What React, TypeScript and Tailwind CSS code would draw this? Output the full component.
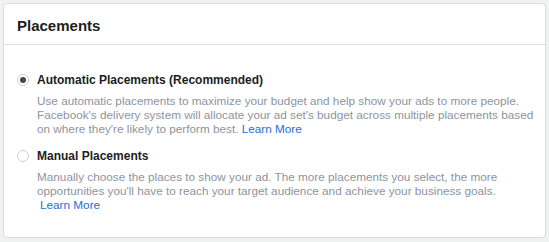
import React from "react";

function Radio({ checked }: { checked?: boolean }) {
  return (
    <span className="mt-[1px] flex h-[12px] w-[12px] shrink-0 items-center justify-center rounded-full border border-[#ccd0d5] bg-white">
      {checked && <span className="h-[6px] w-[6px] rounded-full bg-[#444950]" />}
    </span>
  );
}

export default function App() {
  return (
    <div className="h-[242px] w-[549px] bg-[#f0f2f1] p-[3px]" style={{ fontFamily: '"Liberation Sans", Arial, sans-serif' }}>
      <div className="h-[235px] w-[543px] rounded-[4px] border border-[#dadde1] bg-white">
        <div className="flex h-[41px] items-center border-b border-[#dadde1] px-[13px] pt-[4px]">
          <h2 className="text-[15px] font-bold text-[#1c1e21]">Placements</h2>
        </div>
        <div className="flex flex-col gap-[13px] px-[13px] pt-[28px]">
          <div className="flex gap-[8px]">
            <Radio checked />
            <div className="flex flex-col">
              <div className="text-[12px] font-bold leading-[14px] text-[#1c1e21]">Automatic Placements (Recommended)</div>
              <p className="mt-[7px] whitespace-nowrap text-[11.75px] leading-[14px] text-[#8d949e]">
                Use automatic placements to maximize your budget and help show your ads to more people.
                <br />
                Facebook's delivery system will allocate your ad set's budget across multiple placements based
                <br />
                on where they're likely to perform best. <span className="text-[#216fdb]">Learn More</span>
              </p>
            </div>
          </div>
          <div className="flex gap-[8px]">
            <Radio />
            <div className="flex flex-col">
              <div className="text-[12px] font-bold leading-[14px] text-[#1c1e21]">Manual Placements</div>
              <p className="mt-[7px] whitespace-nowrap text-[11.75px] leading-[14px] text-[#8d949e]">
                Manually choose the places to show your ad. The more placements you select, the more
                <br />
                opportunities you'll have to reach your target audience and achieve your business goals.
                <br />
                <span className="ml-[3px] text-[#216fdb]">Learn More</span>
              </p>
            </div>
          </div>
        </div>
      </div>
    </div>
  );
}
